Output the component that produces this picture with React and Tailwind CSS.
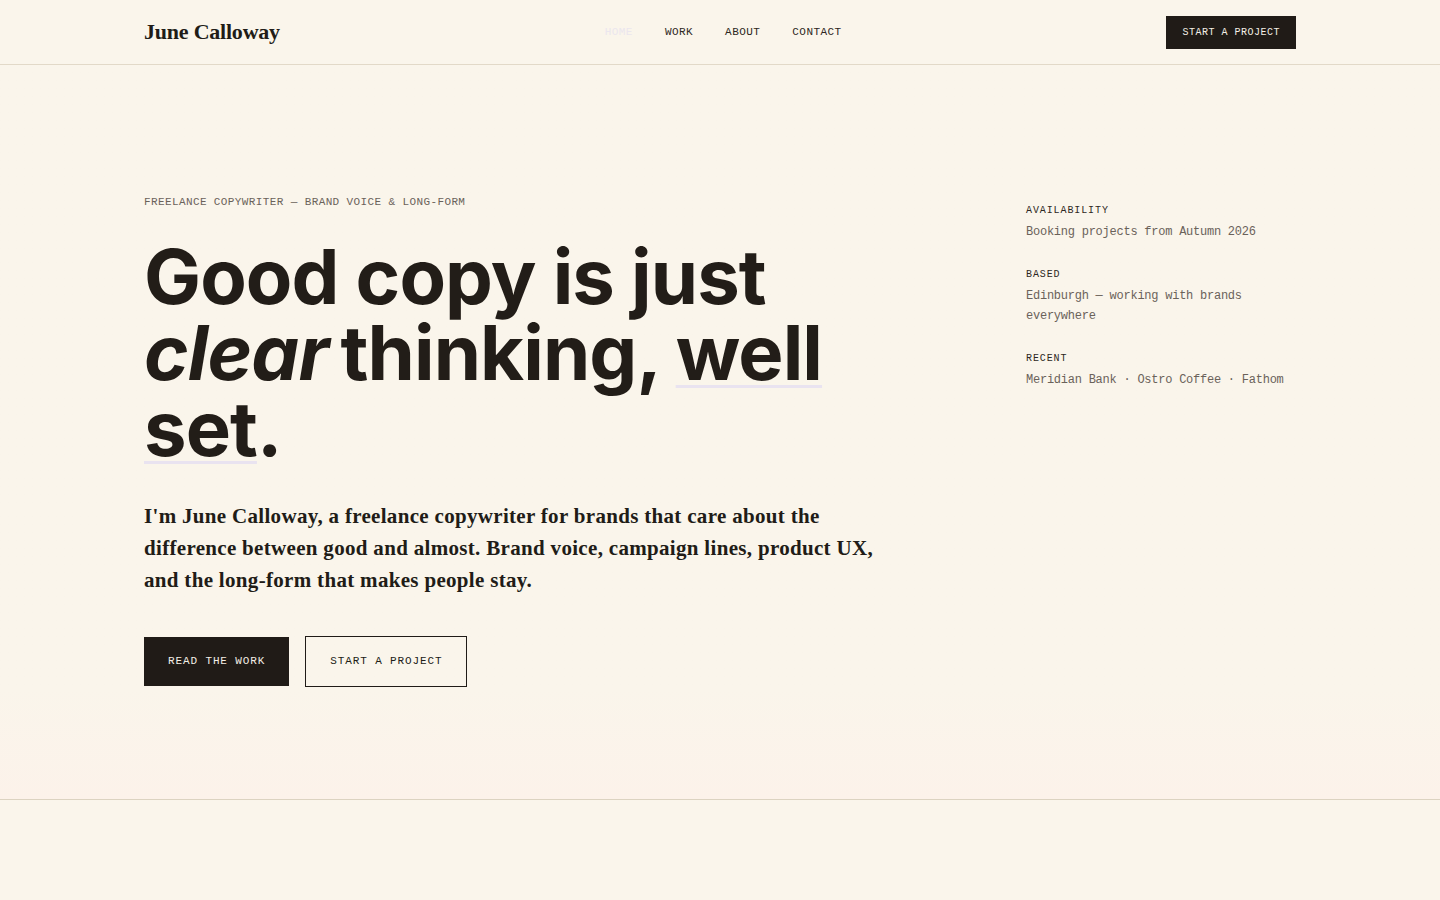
import React from "react";

export default function App() {
  const monoCls = "font-['Liberation_Mono','DejaVu_Sans_Mono',monospace]";
  const ul = "underline decoration-[#e9e3f0] decoration-[3px] underline-offset-[5px]";
  return (
    <div className="min-h-[900px] bg-[#faf5eb] text-[#211c17]">
      <header className="border-b border-[#e2d9c8]">
        <div className="mx-auto flex h-16 max-w-6xl items-center justify-between">
          <div className="font-['Liberation_Serif',serif] text-[22px] font-bold leading-7 tracking-[-0.01em] text-[#211c17]">
            June Calloway
          </div>
          <nav className={`${monoCls} flex items-center gap-8 text-[11px] uppercase tracking-[0.04em] text-[#2d2722]`}>
            <a className="text-[#ebe6ee]">Home</a>
            <a>Work</a>
            <a>About</a>
            <a>Contact</a>
          </nav>
          <a className={`${monoCls} bg-[#201b17] px-4 py-[9px] text-[10px] uppercase leading-[15px] tracking-[0.05em] text-[#f4efe6]`}>
            Start a project
          </a>
        </div>
      </header>

      <section className="border-b border-[#dcd3c1] bg-gradient-to-b from-[#faf5eb] from-85% to-[#fcf2ea]">
        <div className="mx-auto grid max-w-6xl grid-cols-[1fr_270px] gap-12 pt-[129px] pb-[112px]">
          <div>
            <p className={`${monoCls} text-[11px] uppercase leading-4 tracking-[0.035em] text-[#6a625a]`}>
              Freelance copywriter — brand voice &amp; long-form
            </p>
            <h1 className="mt-[28px] font-['Inter',sans-serif] text-[76px] font-bold leading-[76px] tracking-[-0.012em] text-[#221d18]">
              <span className="block">Good copy is just</span>
              <span className="block">
                <em className="italic pr-[12px]">clear</em>thinking, <span className={ul}>well</span>
              </span>
              <span className="block">
                <span className={ul}>set</span>.
              </span>
            </h1>
            <p className="mt-[34px] max-w-[745px] font-['Liberation_Serif',serif] text-[21px] font-bold leading-8 tracking-[0.015em] text-[#211c17]">
              I'm June Calloway, a freelance copywriter for brands that care about the difference between good and almost. Brand voice, campaign lines, product UX, and the long-form that makes people stay.
            </p>
            <div className={`${monoCls} mt-[40px] flex items-center gap-4 text-[11px] uppercase leading-[17px] tracking-[0.08em]`}>
              <a className="bg-[#201b17] px-6 py-4 text-[#f4efe6]">Read the work</a>
              <a className="border border-[#201b17] px-6 py-4 text-[#211c17]">Start a project</a>
            </div>
          </div>

          <aside className={`${monoCls} mt-[10px] flex flex-col gap-[26px]`}>
            <div>
              <div className="text-[10px] uppercase leading-[14px] tracking-[0.09em] text-[#2d2722]">Availability</div>
              <div className="mt-1 text-[12px] leading-5 tracking-[-0.02em] text-[#6a625a]">Booking projects from Autumn 2026</div>
            </div>
            <div>
              <div className="text-[10px] uppercase leading-[14px] tracking-[0.09em] text-[#2d2722]">Based</div>
              <div className="mt-1 text-[12px] leading-5 tracking-[-0.02em] text-[#6a625a]">Edinburgh — working with brands everywhere</div>
            </div>
            <div>
              <div className="text-[10px] uppercase leading-[14px] tracking-[0.09em] text-[#2d2722]">Recent</div>
              <div className="mt-1 text-[12px] leading-5 tracking-[-0.02em] text-[#6a625a]">Meridian Bank · Ostro Coffee · Fathom</div>
            </div>
          </aside>
        </div>
      </section>
    </div>
  );
}
